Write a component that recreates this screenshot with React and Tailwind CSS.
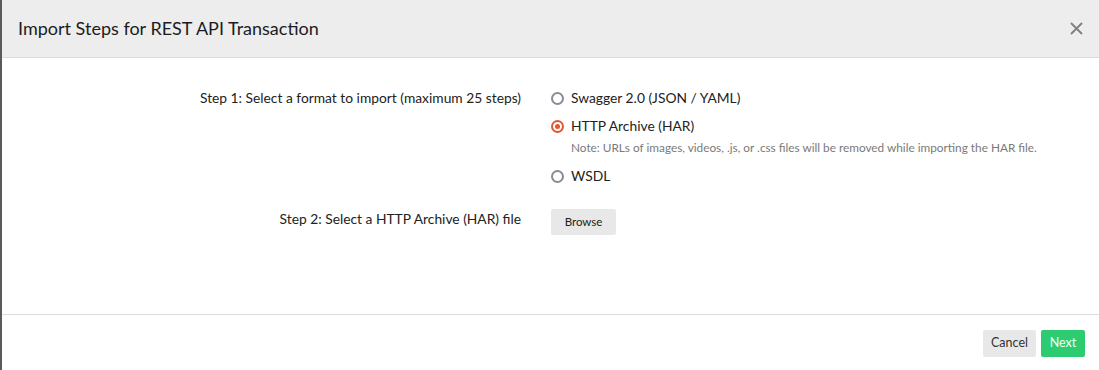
import React, { useState } from "react";

const Radio = ({ checked }) => (
  <span
    className={`inline-flex h-[13px] w-[13px] shrink-0 items-center justify-center rounded-full border-2 ${
      checked ? "border-[#e4572e]" : "border-[#8a8a96]"
    }`}
  >
    {checked && <span className="h-[5px] w-[5px] rounded-full bg-[#e4572e]" />}
  </span>
);

const App = () => {
  const [format, setFormat] = useState("har");

  const Option = ({ id, label, className }) => (
    <label
      className={`flex h-[20px] cursor-pointer items-center gap-[7px] ${className || ""}`}
      onClick={() => setFormat(id)}
    >
      <Radio checked={format === id} />
      <span>{label}</span>
    </label>
  );

  return (
    <div
      className="flex h-[370px] w-[1099px] flex-col border-l-2 border-[#5a5a5a] bg-white text-[#222]"
      style={{ fontFamily: "Lato, 'Open Sans', sans-serif" }}
    >
      {/* header */}
      <div className="flex h-[58px] items-center justify-between border-b border-[#dcdcdc] bg-[#ededed] pl-4 pr-[16px]">
        <h1 className="text-[18px] text-[#1c1c24]">Import Steps for REST API Transaction</h1>
        <svg width="13" height="13" viewBox="0 0 13 13" className="text-[#7b7f86]">
          <path d="M1 1L12 12M12 1L1 12" stroke="currentColor" strokeWidth="1.8" />
        </svg>
      </div>

      {/* body */}
      <div className="flex-1 pt-[30px] text-[13.8px]">
        <div className="flex items-start">
          <div className="w-[519px] text-right leading-[20px]">Step 1: Select a format to import (maximum 25 steps)</div>
          <div className="ml-[30px] flex flex-col">
            <Option id="swagger" label="Swagger 2.0 (JSON / YAML)" />
            <Option id="har" label="HTTP Archive (HAR)" className="mt-[8px]" />
            <div className="mt-[4px] pl-[20px] text-[11.8px] leading-[16px] text-[#7a7a7a]">
              Note: URLs of images, videos, .js, or .css files will be removed while importing the HAR file.
            </div>
            <Option id="wsdl" label="WSDL" className="mt-[10px]" />
          </div>
        </div>

        <div className="mt-[23px] flex items-start">
          <div className="w-[519px] text-right leading-[20px]">Step 2: Select a HTTP Archive (HAR) file</div>
          <button className="ml-[30px] h-[26px] w-[65px] rounded-[2px] bg-[#e8e8e8] text-[11.5px] text-[#222]">
            Browse
          </button>
        </div>
      </div>

      {/* footer */}
      <div className="flex h-[56px] items-start justify-end gap-[5px] border-t border-[#dcdcdc] pr-[14px] pt-[15px]">
        <button className="h-[27px] w-[53px] rounded-[2px] bg-[#e8e8e8] text-[12.5px] text-[#333]">Cancel</button>
        <button className="h-[27px] w-[44px] rounded-[2px] bg-[#2ecc71] text-[12.5px] text-[#f0fff5]">Next</button>
      </div>
    </div>
  );
};

export default App;
